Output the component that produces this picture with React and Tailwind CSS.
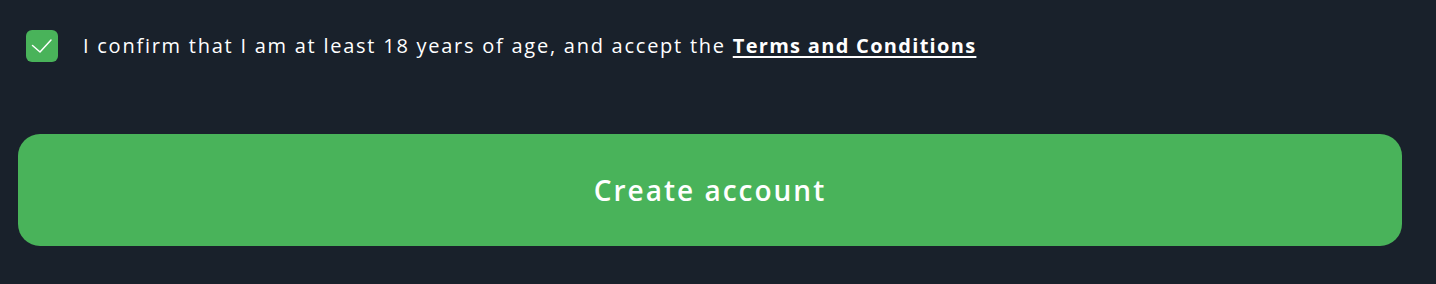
export default function App() {
  return (
    <div className="w-[1436px] h-[284px] bg-[#19212b] pt-[30px] pl-[18px] pr-[34px]" style={{ fontFamily: "'Open Sans', 'Noto Sans', sans-serif" }}>
      <div className="flex items-center pl-[8px] h-[32px]">
        <div className="w-[32px] h-[32px] rounded-[6px] bg-[#49b35a] flex items-center justify-center shrink-0">
          <svg width="32" height="32" viewBox="0 0 32 32" fill="none">
            <path d="M6.5 15.5L14 22L25 10" stroke="white" strokeWidth="1.5" strokeLinecap="round" strokeLinejoin="round" />
          </svg>
        </div>
        <p className="ml-[25px] text-[20px] text-white leading-none tracking-[1.75px] whitespace-nowrap">
          I confirm that I am at least 18 years of age, and accept the{" "}
          <a href="#" className="font-bold tracking-[1.3px] underline underline-offset-[3px] decoration-[2px]">Terms and Conditions</a>
        </p>
      </div>
      <button className="mt-[72px] w-full h-[112px] rounded-[22px] bg-[#49b35a] text-white text-[28px] font-semibold tracking-[2px] flex items-center justify-center">
        Create account
      </button>
    </div>
  );
}
